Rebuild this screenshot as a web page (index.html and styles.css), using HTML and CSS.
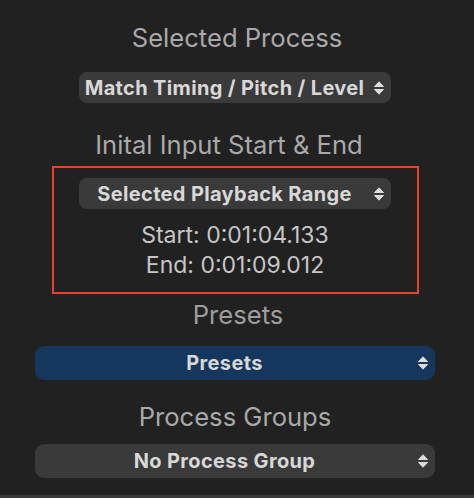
FILE: index.html
```html
<!DOCTYPE html>
<html lang="en">
<head>
<meta charset="utf-8">
<title>Process Settings</title>
<link rel="stylesheet" href="styles.css">
</head>
<body>
<main class="panel">
  <h2 class="title title-process">Selected Process</h2>
  <div class="popup popup-compact popup-match">
    <span class="popup-label">Match Timing / Pitch / Level</span>
    <svg class="popup-arrows" viewBox="0 0 12 16" aria-hidden="true"><path d="M1.5 6.5 L6 1.8 L10.5 6.5 Z M1.5 9.5 L6 14.2 L10.5 9.5 Z"/></svg>
  </div>

  <h2 class="title title-input">Inital Input Start &amp; End</h2>
  <section class="range-box">
    <div class="popup popup-compact">
      <span class="popup-label">Selected Playback Range</span>
      <svg class="popup-arrows" viewBox="0 0 12 16" aria-hidden="true"><path d="M1.5 6.5 L6 1.8 L10.5 6.5 Z M1.5 9.5 L6 14.2 L10.5 9.5 Z"/></svg>
    </div>
    <p class="range-line range-start">Start: 0:01:04.133</p>
    <p class="range-line">End: 0:01:09.012</p>
  </section>

  <h2 class="title title-presets">Presets</h2>
  <div class="popup popup-full popup-blue">
    <span class="popup-label">Presets</span>
    <svg class="popup-arrows" viewBox="0 0 12 16" aria-hidden="true"><path d="M1.5 6.5 L6 1.8 L10.5 6.5 Z M1.5 9.5 L6 14.2 L10.5 9.5 Z"/></svg>
  </div>

  <h2 class="title title-groups">Process Groups</h2>
  <div class="popup popup-full">
    <span class="popup-label">No Process Group</span>
    <svg class="popup-arrows" viewBox="0 0 12 16" aria-hidden="true"><path d="M1.5 6.5 L6 1.8 L10.5 6.5 Z M1.5 9.5 L6 14.2 L10.5 9.5 Z"/></svg>
  </div>
</main>
<div class="bottom-bar"></div>
</body>
</html>
```
FILE: styles.css
```css
html, body {
  margin: 0;
  padding: 0;
  background: #212121;
  height: 100%;
}

body {
  font-family: Inter, "Noto Sans", "Liberation Sans", sans-serif;
  display: flex;
  flex-direction: column;
  width: 474px;
  height: 498px;
  overflow: hidden;
}

.panel {
  flex: 1;
  width: 470px;
  display: flex;
  flex-direction: column;
  align-items: center;
}

.title {
  margin: 0;
  font-size: 25.6px;
  line-height: 32px;
  font-weight: 400;
  color: #a9a9a9;
  text-align: center;
}

.title-process { margin-top: 21.5px; margin-left: 4px; }
.title-input { margin-top: 25.5px; margin-right: 12px; }
.title-presets { margin-top: 4.5px; margin-left: 6px; color: #9e9e9e; }
.title-groups { margin-top: 20.5px; }

.popup {
  display: flex;
  align-items: center;
  background: #3a3a3a;
  border-radius: 8px;
  padding-right: 6px;
  box-sizing: border-box;
  color: #d8d8d8;
}

.popup-label {
  flex: 1;
  text-align: center;
  font-weight: 700;
  font-size: 20px;
  letter-spacing: 0.35px;
  white-space: nowrap;
}

.popup-arrows {
  width: 12px;
  height: 16px;
  margin-left: 3px;
  fill: #dcdcdc;
  stroke: #dcdcdc;
  stroke-width: 1;
  stroke-linejoin: round;
  flex: none;
}

.popup-compact {
  width: 312px;
  height: 31px;
}

.popup-match { margin-top: 18.5px; }

.popup-full {
  width: 400px;
  height: 34px;
  border-radius: 9px;
}

.popup-blue {
  background: #15365d;
  margin-top: 15.5px;
}

.title-groups + .popup-full { margin-top: 11.5px; }

.range-box {
  margin-top: 5.5px;
  width: 367px;
  height: 128px;
  box-sizing: border-box;
  border: 2px solid #e5432c;
  padding-top: 10px;
  display: flex;
  flex-direction: column;
  align-items: center;
}

.range-line {
  margin: 0;
  font-size: 23px;
  line-height: 30px;
  color: #c6c6c6;
  text-align: center;
}

.range-start { margin-top: 11.4px; }

.bottom-bar {
  height: 3px;
  background: #3a3a3a;
  flex: none;
}
```
